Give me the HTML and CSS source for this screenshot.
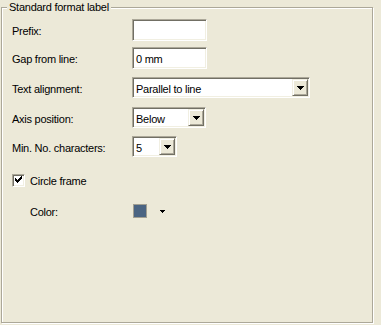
FILE: index.html
```html
<!DOCTYPE html>
<html>
<head>
<meta charset="utf-8">
<link rel="stylesheet" href="styles.css">
</head>
<body>
<div class="frame">
  <div class="legend">Standard format label</div>
  <div class="row r1">
    <span class="lbl">Prefix:</span>
    <div class="field"></div>
  </div>
  <div class="row r2">
    <span class="lbl">Gap from line:</span>
    <div class="field">0 mm</div>
  </div>
  <div class="row r3">
    <span class="lbl">Text alignment:</span>
    <div class="select wide"><span class="val">Parallel to line</span><span class="btn"><svg width="7" height="4" viewBox="0 0 7 4"><path d="M0 0h7v1h-1v1h-1v1h-1v1h-1v-1h-1v-1h-1v-1h-1z" fill="#000"/></svg></span></div>
  </div>
  <div class="row r4">
    <span class="lbl">Axis position:</span>
    <div class="select mid"><span class="val">Below</span><span class="btn"><svg width="7" height="4" viewBox="0 0 7 4"><path d="M0 0h7v1h-1v1h-1v1h-1v1h-1v-1h-1v-1h-1v-1h-1z" fill="#000"/></svg></span></div>
  </div>
  <div class="row r5">
    <span class="lbl">Min. No. characters:</span>
    <div class="select small"><span class="val">5</span><span class="btn"><svg width="7" height="4" viewBox="0 0 7 4"><path d="M0 0h7v1h-1v1h-1v1h-1v1h-1v-1h-1v-1h-1v-1h-1z" fill="#000"/></svg></span></div>
  </div>
  <div class="row r6">
    <span class="check"><svg width="9" height="9" viewBox="0 0 9 9"><path d="M1 2h1v3h-1zM2 3h1v3h-1zM3 4h1v3h-1zM4 3h1v3h-1zM5 2h1v3h-1zM6 1h1v3h-1zM7 0h1v3h-1z" fill="#000"/></svg></span>
    <span class="cklbl">Circle frame</span>
  </div>
  <div class="row r7">
    <span class="clbl">Color:</span>
    <span class="swatch"></span>
    <svg class="darrow" width="5" height="3" viewBox="0 0 5 3"><path d="M0 0h5v1h-1v1h-1v1h-1v-1h-1v-1h-1z" fill="#000"/></svg>
  </div>
</div>
</body>
</html>
```

FILE: styles.css
```css
html, body {
  margin: 0;
  padding: 0;
}
body {
  width: 381px;
  height: 325px;
  background: #ece9d8;
  font-family: "Liberation Sans", Arial, sans-serif;
  font-size: 11px;
  letter-spacing: -0.25px;
  color: #000;
  overflow: hidden;
}
.frame {
  position: relative;
  box-sizing: border-box;
  margin: 7px 0 0 1px;
  width: 372px;
  height: 316px;
  border: 1px solid #aca899;
  box-shadow: inset 1px 1px 0 #fff, 1px 1px 0 #fff;
  padding: 11px 0 0 10px;
  display: flex;
  flex-direction: column;
}
.legend {
  position: absolute;
  top: -7px;
  left: 5px;
  padding: 0 2px;
  line-height: 13px;
  background: #ece9d8;
}
.row {
  display: flex;
  align-items: center;
}
.r2 { margin-top: 6px; }
.r3 { margin-top: 8px; }
.r4 { margin-top: 9px; }
.r5 { margin-top: 8px; }
.r6 { margin-top: 17px; }
.r7 { margin-top: 17px; }
.lbl {
  width: 120px;
  flex: none;
  padding-top: 2px;
}
.field {
  box-sizing: border-box;
  width: 75px;
  height: 22px;
  background: #fff;
  border: 1px solid;
  border-color: #aca899 #fff #fff #aca899;
  box-shadow: inset 1px 1px 0 #716f64, inset -1px -1px 0 #f1efe2;
  padding: 2px 0 0 3px;
  display: flex;
  align-items: center;
}
.select {
  box-sizing: border-box;
  height: 21px;
  background: #fff;
  border: 1px solid;
  border-color: #aca899 #fff #fff #aca899;
  box-shadow: inset 1px 1px 0 #716f64, inset -1px -1px 0 #f1efe2;
  padding: 1px;
  display: flex;
  align-items: stretch;
}
.wide { width: 178px; }
.mid { width: 74px; }
.small { width: 45px; }
.val {
  flex: 1;
  padding: 2px 0 0 2px;
  display: flex;
  align-items: center;
}
.btn {
  box-sizing: border-box;
  width: 16px;
  flex: none;
  background: #ece9d8;
  border: 1px solid;
  border-color: #f1efe2 #716f64 #716f64 #f1efe2;
  box-shadow: inset 1px 1px 0 #fff, inset -1px -1px 0 #aca899;
  display: flex;
  align-items: center;
  justify-content: center;
}
.btn svg { display: block; margin-top: 1px; }
.check {
  box-sizing: border-box;
  width: 13px;
  height: 13px;
  flex: none;
  background: #fff;
  border: 1px solid;
  border-color: #aca899 #fff #fff #aca899;
  box-shadow: inset 1px 1px 0 #716f64, inset -1px -1px 0 #f1efe2;
  padding: 1px;
}
.check svg { display: block; }
.cklbl {
  margin-left: 5px;
  padding-top: 1px;
}
.clbl {
  width: 103px;
  margin-left: 18px;
  flex: none;
  padding-top: 1px;
}
.swatch {
  box-sizing: border-box;
  width: 14px;
  height: 14px;
  flex: none;
  background: #4a6482;
  border: 1px solid #a19f92;
}
.darrow {
  display: block;
  margin-left: 13px;
}
```
